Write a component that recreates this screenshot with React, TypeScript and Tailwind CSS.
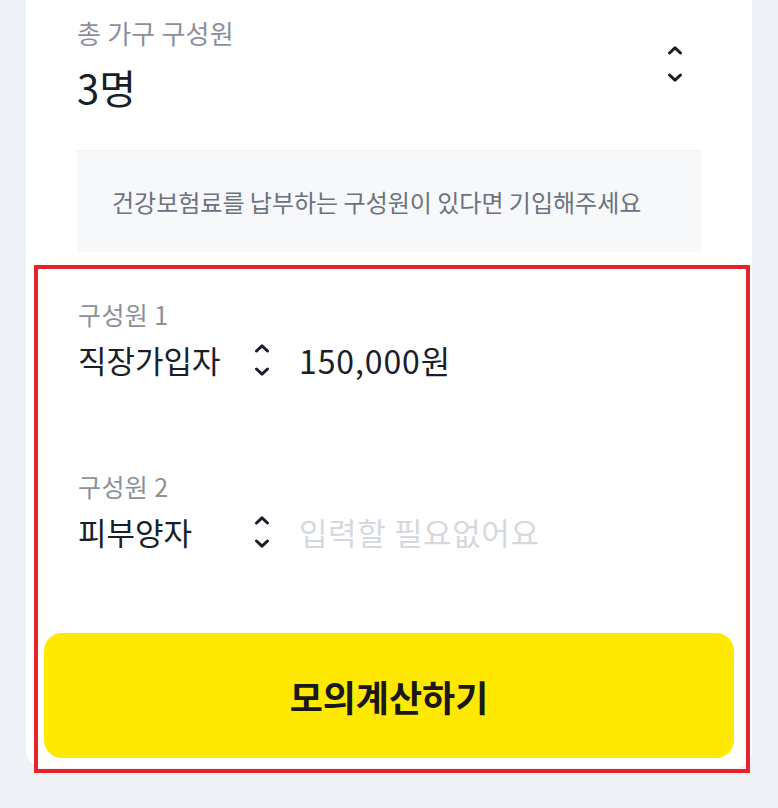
import React from "react";

const font = { fontFamily: '"Noto Sans CJK KR", "Noto Sans", sans-serif' };

// Small up/down caret pair used as the select arrow
const Stepper = ({ gap = "gap-[14px]" }: { gap?: string }) => (
  <div className={`flex flex-col items-center ${gap}`}>
    <svg width="16" height="10" viewBox="0 0 16 10" fill="none">
      <polyline
        points="2.5,8 8,2.8 13.5,8"
        stroke="#191f28"
        strokeWidth="3"
        strokeLinecap="round"
        strokeLinejoin="round"
      />
    </svg>
    <svg width="16" height="10" viewBox="0 0 16 10" fill="none">
      <polyline
        points="2.5,2 8,7.2 13.5,2"
        stroke="#191f28"
        strokeWidth="3"
        strokeLinecap="round"
        strokeLinejoin="round"
      />
    </svg>
  </div>
);

const Member = ({
  label,
  type,
  value,
  placeholder,
}: {
  label: string;
  type: string;
  value?: string;
  placeholder?: string;
}) => (
  <div className="flex flex-col">
    <p className="text-[25px] leading-[30px] tracking-[0.4px] text-[#8b919a]">{label}</p>
    <div className="mt-[12px] flex items-center">
      <span className="w-[176px] text-[31px] leading-[38px] text-[#191f28]">
        {type}
      </span>
      <Stepper gap="gap-[14px]" />
      {value ? (
        <span className="ml-[29px] text-[32px] leading-[38px] tracking-[0.9px] text-[#191f28]">
          {value}
        </span>
      ) : (
        <span className="ml-[29px] text-[31px] leading-[38px] tracking-[0.6px] text-[#d5d9de]">
          {placeholder}
        </span>
      )}
    </div>
  </div>
);

export default function App() {
  return (
    <div className="min-h-screen bg-[#eef1f5] pl-[26px]" style={font}>
      <div className="w-[726px] bg-white rounded-b-[18px]">
        {/* Household size */}
        <div className="px-[51px] pt-[17px]">
          <div className="flex items-center justify-between">
            <div>
              <p className="text-[26px] leading-[31px] tracking-[0.2px] text-[#8b919a]">
                총 가구 구성원
              </p>
              <p className="mt-[15px] text-[40px] leading-[48px] text-[#191f28]">
                3명
              </p>
            </div>
            <div className="mr-[18px]">
              <Stepper gap="gap-[18px]" />
            </div>
          </div>

          <div className="mt-[39px] h-[102px] flex items-center border-t border-[#eef0f3] bg-[#f7f8fa] pl-[35px]">
            <p className="text-[24px] leading-[30px] text-[#6b7280]">
              건강보험료를 납부하는 구성원이 있다면 기입해주세요
            </p>
          </div>
        </div>

        {/* Members */}
        <div className="relative pt-[47px] pb-[10px]">
          <div className="px-[52px] flex flex-col gap-[92px]">
            <Member label="구성원 1" type="직장가입자" value="150,000원" />
            <Member label="구성원 2" type="피부양자" placeholder="입력할 필요없어요" />
          </div>

          <div className="px-[18px] mt-[82px]">
            <button className="w-full h-[125px] rounded-[18px] bg-[#ffe900] text-[36px] font-bold text-[#191919]">
              모의계산하기
            </button>
          </div>

          {/* annotation frame */}
          <div className="pointer-events-none absolute top-[13px] left-[8px] right-[2px] bottom-[-5px] border-[4px] border-[#e8212b]" />
        </div>
      </div>
    </div>
  );
}
